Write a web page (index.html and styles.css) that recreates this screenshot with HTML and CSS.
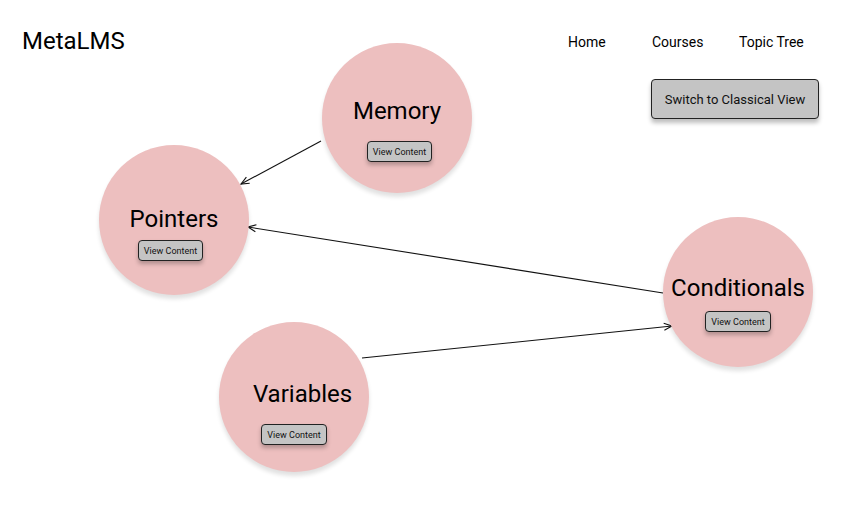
FILE: index.html
```html
<!DOCTYPE html>
<html lang="en">
<head>
<meta charset="utf-8">
<title>MetaLMS – Topic Tree</title>
<link rel="stylesheet" href="styles.css">
</head>
<body>
<div class="app">
  <header class="header">
    <div class="brand">MetaLMS</div>
    <div class="header-right">
      <nav class="nav">
        <a class="nav-link" href="#">Home</a>
        <a class="nav-link" href="#">Courses</a>
        <a class="nav-link" href="#">Topic Tree</a>
      </nav>
      <button class="switch-btn">Switch to Classical View</button>
    </div>
  </header>

  <div class="graph">
    <svg class="edges" width="852" height="518" viewBox="0 0 852 518">
      <defs>
        <marker id="arrow" viewBox="0 0 10 10" refX="9" refY="5" markerWidth="10" markerHeight="10" markerUnits="userSpaceOnUse" orient="auto">
          <path d="M1,1.5 L9,5 L1,8.5" fill="none" stroke="#111" stroke-width="1.1"/>
        </marker>
      </defs>
      <line x1="321" y1="141" x2="241" y2="184" class="edge" marker-end="url(#arrow)"/>
      <line x1="663" y1="293" x2="248" y2="227" class="edge" marker-end="url(#arrow)"/>
      <line x1="362" y1="358" x2="672" y2="326" class="edge" marker-end="url(#arrow)"/>
    </svg>

    <div class="node node-memory">
      <div class="node-label">Memory</div>
      <button class="view-btn">View Content</button>
    </div>
    <div class="node node-pointers">
      <div class="node-label">Pointers</div>
      <button class="view-btn">View Content</button>
    </div>
    <div class="node node-conditionals">
      <div class="node-label">Conditionals</div>
      <button class="view-btn">View Content</button>
    </div>
    <div class="node node-variables">
      <div class="node-label">Variables</div>
      <button class="view-btn">View Content</button>
    </div>
  </div>
</div>
</body>
</html>
```

FILE: styles.css
```css
* { box-sizing: border-box; }

html, body {
  margin: 0;
  padding: 0;
  background: #ffffff;
}

body {
  font-family: Roboto, "Liberation Sans", Arial, sans-serif;
  color: #000;
  width: 852px;
  height: 518px;
  overflow: hidden;
}

.app {
  position: relative;
  width: 852px;
  height: 518px;
}

.header {
  display: flex;
  justify-content: space-between;
  align-items: flex-start;
  padding: 27px 33px 0 22px;
  position: relative;
  z-index: 2;
}

.brand {
  font-size: 24px;
  line-height: 28px;
  font-weight: 400;
}

.header-right {
  display: flex;
  flex-direction: column;
  width: 251px;
  padding-top: 7px;
}

.nav {
  display: grid;
  grid-template-columns: 84px 87px auto;
}

.nav-link {
  font-size: 14px;
  line-height: 16px;
  color: #000;
  text-decoration: none;
}

.switch-btn {
  align-self: flex-end;
  margin-top: 29px;
  width: 168px;
  height: 40px;
  background: #c4c4c4;
  border: 1px solid #222;
  border-radius: 4px;
  box-shadow: 0 4px 4px rgba(0, 0, 0, 0.25);
  font-family: inherit;
  font-size: 13px;
  color: #111;
  padding: 0;
}

.graph {
  position: absolute;
  inset: 0;
  z-index: 1;
}

.edges {
  position: absolute;
  left: 0;
  top: 0;
}

.edge {
  stroke: #111;
  stroke-width: 1.1;
}

.node {
  position: absolute;
  width: 150px;
  height: 150px;
  border-radius: 50%;
  background: #edbfbf;
  box-shadow: 0 4px 4px rgba(0, 0, 0, 0.12);
  display: flex;
  flex-direction: column;
  align-items: center;
}

.node-label {
  font-size: 24px;
  line-height: 28px;
  white-space: nowrap;
}

.view-btn {
  height: 21px;
  padding: 0 5px;
  background: #c4c4c4;
  border: 1px solid #222;
  border-radius: 4px;
  box-shadow: 0 3px 4px rgba(0, 0, 0, 0.25);
  font-family: inherit;
  font-size: 9px;
  color: #111;
}

.node-memory { left: 322px; top: 43px; padding-top: 54px; gap: 16px; }
.node-memory .view-btn { margin-left: 5px; }

.node-pointers { left: 99px; top: 145px; padding-top: 60px; gap: 7px; }
.node-pointers .view-btn { margin-left: -7px; }

.node-conditionals { left: 663px; top: 217px; padding-top: 57px; gap: 9px; }

.node-variables { left: 219px; top: 322px; padding-top: 58px; gap: 16px; }
.node-variables .node-label { margin-left: 17px; }
```
